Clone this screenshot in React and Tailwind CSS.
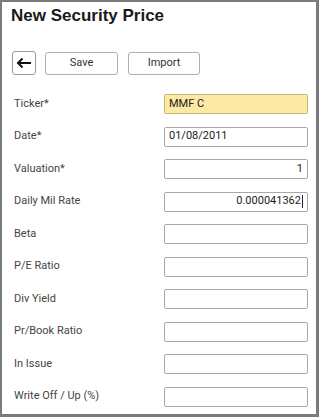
import React from "react";

const fields = [
  { label: "Ticker*", value: "MMF C", highlight: true },
  { label: "Date*", value: "01/08/2011" },
  { label: "Valuation*", value: "1", right: true },
  { label: "Daily Mil Rate", value: "0.000041362", right: true, caret: true },
  { label: "Beta", value: "" },
  { label: "P/E Ratio", value: "" },
  { label: "Div Yield", value: "" },
  { label: "Pr/Book Ratio", value: "" },
  { label: "In Issue", value: "" },
  { label: "Write Off / Up (%)", value: "" },
];

const App = () => {
  return (
    <div className="w-[321px] h-[419px] bg-white" style={{ fontFamily: "Roboto, 'Liberation Sans', sans-serif" }}>
      <div className="w-[319px] h-[417px] border-l-2 border-t-2 border-r-[3px] border-b-[3px] border-[#7b7b7b] bg-white">
        <h1 className="pl-[9px] pt-[4px] text-[17px] leading-[20px] font-bold text-[#1a1a1a]" style={{ fontFamily: "'Liberation Sans', Arial, sans-serif" }}>
          New Security Price
        </h1>

        {/* toolbar */}
        <div className="flex items-center mt-[25px] pl-[10px]">
          <button className="w-[24px] h-[24px] flex items-center justify-center border border-[#9a9a9a] rounded-[3px] bg-white">
            <svg width="16" height="12" viewBox="0 0 16 12" fill="none">
              <path d="M15 6H2M6.5 1.5L2 6l4.5 4.5" stroke="#111" strokeWidth="2" />
            </svg>
          </button>
          <button className="ml-[9px] w-[73px] h-[23px] border border-[#b0b0b0] rounded-[3px] bg-white text-[11px] text-[#333]">
            Save
          </button>
          <button className="ml-[10px] w-[72px] h-[23px] border border-[#b0b0b0] rounded-[3px] bg-white text-[11px] text-[#333]">
            Import
          </button>
        </div>

        {/* form */}
        <div className="mt-[19px] flex flex-col gap-[12.5px]">
          {fields.map((f, i) => (
            <div key={i} className="flex items-center h-[20px]">
              <div className="w-[162px] pl-[12px] text-[11px] text-[#444]">{f.label}</div>
              <div
                className={
                  "w-[144px] h-[20px] rounded-[2px] border flex items-center px-[4px] text-[11px] text-[#222] " +
                  (f.highlight ? "bg-[#fde9a4] border-[#c9b67a]" : "bg-white border-[#a8a8a8]") +
                  (f.right ? " justify-end" : "")
                }
              >
                <span>{f.value}</span>
                {f.caret && <span className="inline-block w-px h-[13px] bg-[#222] ml-[1px]" />}
              </div>
            </div>
          ))}
        </div>
      </div>
    </div>
  );
};

export default App;
